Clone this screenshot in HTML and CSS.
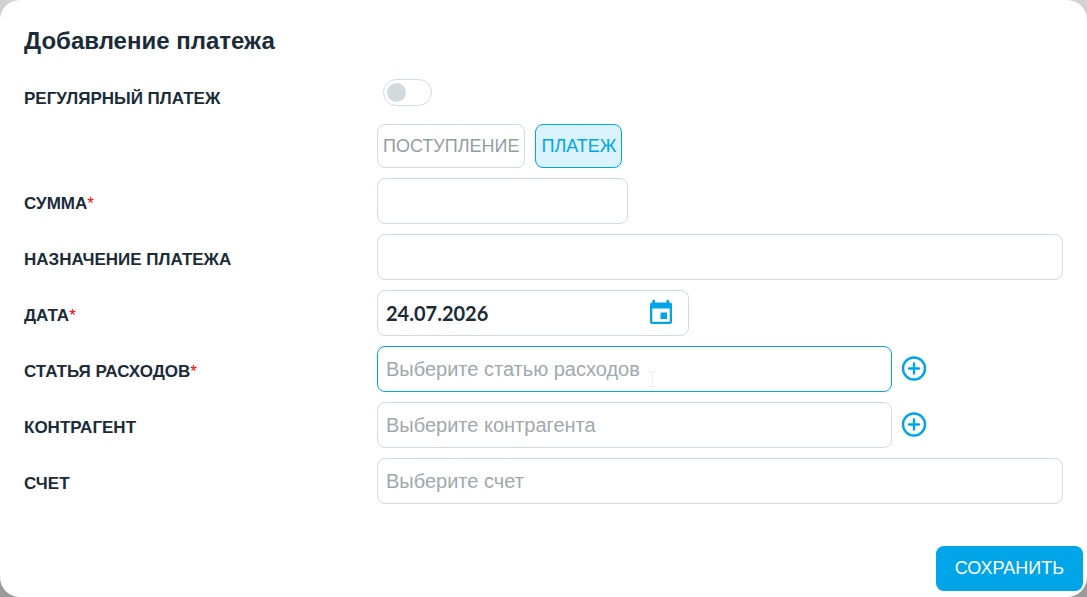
FILE: index.html
```html
<!DOCTYPE html>
<html lang="ru">
<head>
  <meta charset="UTF-8">
  <meta name="viewport" content="width=device-width, initial-scale=1.0">
  <title>Добавление платежа</title>
  <link rel="stylesheet" href="styles.css">
</head>
<body>
  <form class="modal">
    <h1>Добавление платежа</h1>

    <div class="row row-switch">
      <label class="caption" for="regular">РЕГУЛЯРНЫЙ ПЛАТЕЖ</label>
      <input class="switch" type="checkbox" id="regular">
    </div>

    <div class="row types">
      <button class="type-btn" type="button">ПОСТУПЛЕНИЕ</button>
      <button class="type-btn active" type="button">ПЛАТЕЖ</button>
    </div>

    <div class="row">
      <label class="caption" for="sum">СУММА<span class="required">*</span></label>
      <input class="field short" type="text" id="sum">
    </div>

    <div class="row">
      <label class="caption" for="purpose">НАЗНАЧЕНИЕ ПЛАТЕЖА</label>
      <input class="field" type="text" id="purpose">
    </div>

    <div class="row">
      <label class="caption" for="date">ДАТА<span class="required">*</span></label>
      <div class="field date">
        <input type="text" id="date" value="24.07.2026">
        <button class="icon-btn" type="button" aria-label="Календарь">
          <svg width="24" height="26" viewBox="0 0 24 26">
            <path fill="#00a5e8" fill-rule="evenodd" d="M3.500 0h2.500v2.500h11.500V0H20v2.500h1a2 2 0 0 1 2 2V22a2 2 0 0 1-2 2H3a2 2 0 0 1-2-2V4.500a2 2 0 0 1 2-2h.5zM3.300 8.500v13.200h17.400V8.500zM11.500 12.500h6.500v6.500h-6.500z"/>
          </svg>
        </button>
      </div>
    </div>

    <div class="row">
      <label class="caption" for="article">СТАТЬЯ РАСХОДОВ<span class="required">*</span></label>
      <div class="with-add">
        <input class="field focused" type="text" id="article" placeholder="Выберите статью расходов">
        <svg class="cursor" width="7" height="16" viewBox="0 0 7 16">
          <path fill="none" stroke="#eceeef" d="M0 .5h3M4 .5h3M3.500 1v14M0 15.500h3M4 15.500h3"/>
        </svg>
        <button class="icon-btn" type="button" aria-label="Добавить статью">
          <svg width="26" height="26" viewBox="0 0 26 26">
            <g fill="none" stroke="#00a5e8" stroke-linecap="round" stroke-width="2.400">
              <circle cx="13" cy="12.500" r="11"/>
              <path d="M13 7.500v10M8 12.500h10"/>
            </g>
          </svg>
        </button>
      </div>
    </div>

    <div class="row">
      <label class="caption" for="agent">КОНТРАГЕНТ</label>
      <div class="with-add">
        <input class="field" type="text" id="agent" placeholder="Выберите контрагента">
        <button class="icon-btn" type="button" aria-label="Добавить контрагента">
          <svg width="26" height="26" viewBox="0 0 26 26">
            <g fill="none" stroke="#00a5e8" stroke-linecap="round" stroke-width="2.400">
              <circle cx="13" cy="12.500" r="11"/>
              <path d="M13 7.500v10M8 12.500h10"/>
            </g>
          </svg>
        </button>
      </div>
    </div>

    <div class="row">
      <label class="caption" for="account">СЧЕТ</label>
      <input class="field" type="text" id="account" placeholder="Выберите счет">
    </div>

    <div class="footer">
      <button class="save-btn" type="submit">СОХРАНИТЬ</button>
    </div>
  </form>
</body>
</html>
```
FILE: styles.css
```css
* {
  box-sizing: border-box;
}
body {
  margin: 0;
  background: linear-gradient(#d2d2d2, #9a9a9a);
  font-family: "Liberation Sans", Arial, sans-serif;
  color: #1b2b38;
}
button, input {
  font-family: inherit;
}
.modal {
  display: flex;
  flex-direction: column;
  gap: 10px;
  min-height: 100vh;
  padding: 25px 24px 6px;
  background-color: white;
  border-radius: 20px;
}
h1 {
  margin: 0;
  padding-bottom: 6px;
  font-size: 24px;
  line-height: 32px;
}
.row {
  display: grid;
  grid-template-columns: 353px 1fr;
  align-items: start;
}
.row-switch {
  min-height: 41px;
}
.caption {
  padding-top: 16px;
  font-size: 17px;
  font-weight: bold;
  line-height: 20px;
}
.required {
  color: red;
  font-weight: normal;
}
.switch {
  appearance: none;
  display: flex;
  align-items: center;
  width: 49px;
  height: 27px;
  margin: 6px;
  padding: 0 3px;
  border: 1px solid #d3dade;
  border-radius: 14px;
}
.switch::before {
  content: "";
  width: 19px;
  height: 19px;
  border-radius: 50%;
  background-color: #d3dade;
}
.switch:checked::before {
  margin-left: auto;
  background-color: #00a5e8;
}
.types {
  display: flex;
  gap: 10px;
  padding-left: 353px;
}
.type-btn {
  height: 44px;
  padding: 0 5px;
  border: 1px solid #d3dade;
  border-radius: 8px;
  background-color: white;
  color: #959da3;
  font-size: 18px;
}
.type-btn.active {
  border-color: #00a5e8;
  background-color: #d9f2fc;
  color: #00a5e8;
}
.field {
  width: 100%;
  height: 46px;
  padding: 0 8px;
  border: 1px solid #d3dade;
  border-radius: 8px;
  outline: none;
  background-color: white;
  color: inherit;
  font-size: 20px;
}
.field::placeholder {
  color: #a1a8ad;
}
.field.focused {
  border-color: #00a5e8;
}
.short {
  width: 251px;
}
.date {
  display: flex;
  align-items: center;
  width: 312px;
  padding-right: 15px;
}
.date input {
  flex: 1;
  min-width: 0;
  padding: 0;
  border: none;
  outline: none;
  color: inherit;
  font: bold 20px Lato, sans-serif;
}
.icon-btn {
  display: flex;
  padding: 0;
  border: none;
  background: none;
  cursor: pointer;
}
.with-add {
  position: relative;
  display: grid;
  grid-template-columns: 1fr 26px;
  align-items: center;
  gap: 9px;
  margin-right: 136px;
}
/* text pointer over the focused field */
.cursor {
  position: absolute;
  left: 272px;
  top: 25px;
}
.footer {
  display: flex;
  justify-content: flex-end;
  margin: auto -20px 0 0;
}
.save-btn {
  height: 45px;
  padding: 0 19px;
  border: none;
  border-radius: 8px;
  background-color: #00a5e8;
  color: white;
  font-size: 18px;
  cursor: pointer;
}
```
